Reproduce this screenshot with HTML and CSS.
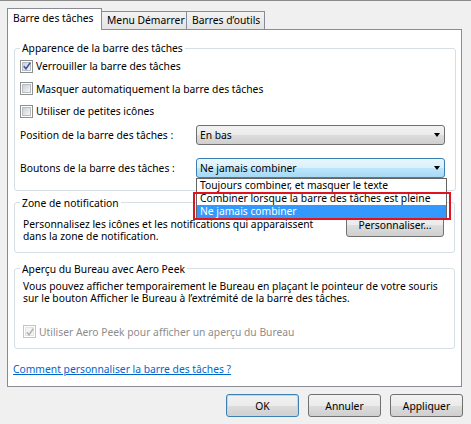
FILE: index.html
```html
<!DOCTYPE html>
<html lang="fr">
<head>
	<meta charset="UTF-8">
	<title>Propriétés de la barre des tâches</title>
	<link rel="stylesheet" href="styles.css">
</head>
<body>
	<div class="dialog">
		<div class="tabs">
			<div class="tab active">Barre des tâches</div>
			<div class="tab">Menu Démarrer</div>
			<div class="tab">Barres d’outils</div>
		</div>
		<div class="panel">
			<fieldset class="group group-look">
				<legend>Apparence de la barre des tâches</legend>
				<div class="check">
					<span class="box"><svg width="8" height="8" viewBox="0 0 8 8"><path d="M0.8 4.2 L3 6.8 L7.3 0.6" fill="none" stroke="#3e55a6" stroke-width="1.6"/></svg></span>
					<span>Verrouiller la barre des tâches</span>
				</div>
				<div class="check">
					<span class="box"></span>
					<span>Masquer automatiquement la barre des tâches</span>
				</div>
				<div class="check">
					<span class="box"></span>
					<span>Utiliser de petites icônes</span>
				</div>
				<div class="field field-first">
					<span class="field-label">Position de la barre des tâches :</span>
					<div class="combo">
						<span>En bas</span>
						<span class="arrow"></span>
					</div>
				</div>
				<div class="field">
					<span class="field-label">Boutons de la barre des tâches :</span>
					<div class="combo combo-hot">
						<span>Ne jamais combiner</span>
						<span class="arrow"></span>
						<ul class="droplist">
							<li>Toujours combiner, et masquer le texte</li>
							<li>Combiner lorsque la barre des tâches est pleine</li>
							<li class="selected">Ne jamais combiner</li>
						</ul>
						<div class="mark"></div>
					</div>
				</div>
			</fieldset>

			<fieldset class="group group-notify">
				<legend>Zone de notification</legend>
				<div class="notify-row">
					<p class="notify-text">Personnalisez les icônes et les notifications qui apparaissent<br>dans la zone de notification.</p>
					<div class="button btn-custom">Personnaliser...</div>
				</div>
			</fieldset>

			<fieldset class="group group-peek">
				<legend>Aperçu du Bureau avec Aero Peek</legend>
				<p class="peek-text">Vous pouvez afficher temporairement le Bureau en plaçant le pointeur de votre souris<br>sur le bouton Afficher le Bureau à l’extrémité de la barre des tâches.</p>
				<div class="check check-disabled">
					<span class="box"><svg width="8" height="8" viewBox="0 0 8 8"><path d="M0.8 4.2 L3 6.8 L7.3 0.6" fill="none" stroke="#b4b4b4" stroke-width="1.6"/></svg></span>
					<span>Utiliser Aero Peek pour afficher un aperçu du Bureau</span>
				</div>
			</fieldset>

			<a class="help" href="#">Comment personnaliser la barre des tâches ?</a>
		</div>
		<div class="actions">
			<div class="button btn-default">OK</div>
			<div class="button">Annuler</div>
			<div class="button">Appliquer</div>
		</div>
	</div>
</body>
</html>
```

FILE: styles.css
```css
*{
	margin:0;
	padding:0;
	box-sizing: border-box;
}
body{
	background-color: #f0f0f0;
	font-family: "Noto Sans", "Open Sans", sans-serif;
	font-size: 10.3px;
	color: #000;
}
.dialog{
	width: 471px;
	height: 424px;
	border-top: 1px solid #8a8a8a;
}

/* onglets */
.tabs{
	display: flex;
	align-items: flex-start;
	padding-left: 7px;
	margin-top: 7px;
	height: 21px;
}
.tab{
	height: 18px;
	margin-top: 3px;
	line-height: 17px;
	padding: 0 5px;
	border: 1px solid #898c95;
	border-bottom: none;
	border-left: none;
	background: linear-gradient(#f3f3f3, #e3e3e3);
	white-space: nowrap;
	overflow: hidden;
}
.tab:nth-child(2){ width: 85px; }
.tab:nth-child(3){ width: 78px; }
.tab.active{
	width: 95px;
	height: 22px;
	margin-top: 0;
	line-height: 19px;
	padding-left: 5px;
	border-left: 1px solid #898c95;
	background: #fff;
	position: relative;
	z-index: 2;
}

/* panneau */
.panel{
	width: 455px;
	height: 358px;
	margin-left: 7px;
	background-color: #fff;
	border: 1px solid #898c95;
	padding: 11px 6px 0;
}
.group{
	border: 1px solid #d5dfe5;
	border-radius: 3px;
	padding: 0 10px 0 5px;
}
.group legend{
	padding: 0 2px;
	line-height: 14px;
}
.group-look{
	padding-bottom: 12px;
}
.group-notify{
	margin-top: 5px;
	padding-bottom: 9px;
}
.group-peek{
	margin-top: 9px;
	padding-bottom: 5px;
}

/* cases a cocher */
.check{
	display: flex;
	align-items: center;
	height: 22.5px;
}
.box{
	width: 13px;
	height: 13px;
	margin-right: 3px;
	border: 1px solid #8e8f8f;
	background: #fff;
	display: flex;
	align-items: center;
	justify-content: center;
	position: relative;
}
.box::before{
	content: "";
	position: absolute;
	left: 1px;
	top: 1px;
	right: 1px;
	bottom: 1px;
	background: linear-gradient(135deg, #cbcfd5, #f6f6f6);
	border: 1px solid #b7bcc3;
}
.box svg{
	position: relative;
}
.check-disabled{
	color: #8d8d8d;
	margin-top: 16px;
	padding-left: 3px;
}
.check-disabled .box{
	border-color: #c4c4c4;
}
.check-disabled .box::before{
	background: #f4f4f4;
	border-color: #e3e3e3;
}

/* listes deroulantes */
.field{
	display: flex;
	align-items: center;
	height: 20px;
	margin-top: 13px;
}
.field-first{
	margin-top: 2px;
}
.field-label{
	width: 176px;
}
.combo{
	width: 249px;
	height: 20px;
	border: 1px solid #707070;
	border-radius: 3px;
	background: linear-gradient(#f2f2f2 0%, #ebebeb 50%, #dddddd 50%, #cfcfcf 100%);
	display: flex;
	align-items: center;
	justify-content: space-between;
	padding: 0 4px 0 3px;
	position: relative;
}
.combo-hot{
	border-color: #3c7fb1;
	background: linear-gradient(#eaf6fd 0%, #d9f0fc 50%, #bee6fd 50%, #a7d9f5 100%);
}
.arrow{
	width: 0;
	height: 0;
	border-left: 3.5px solid transparent;
	border-right: 3.5px solid transparent;
	border-top: 4px solid #000;
}
.droplist{
	list-style: none;
	position: absolute;
	left: -1px;
	top: 19px;
	width: 251px;
	border: 1px solid #646464;
	background: #fff;
	z-index: 3;
}
.droplist li{
	height: 13px;
	line-height: 13px;
	padding-left: 3px;
	white-space: nowrap;
}
.droplist li.selected{
	background-color: #3399ff;
	color: #fff;
}
.mark{
	position: absolute;
	left: -4px;
	top: 33px;
	width: 258px;
	height: 28px;
	border: 2px solid #e0141e;
	z-index: 4;
}

/* zone de notification */
.notify-row{
	display: flex;
	align-items: flex-end;
	justify-content: space-between;
	padding-top: 4px;
}
.notify-text{
	line-height: 12.5px;
	padding-left: 3px;
}
.btn-custom{
	width: 98px;
	height: 18px;
	margin-bottom: 6px;
}

.peek-text{
	line-height: 12.5px;
	padding: 4px 0 0 3px;
}

.help{
	display: block;
	margin: 13px 0 0 -1px;
	color: #0066cc;
	text-decoration: underline;
	line-height: 14px;
}

/* boutons */
.actions{
	display: flex;
	justify-content: flex-end;
	gap: 9px;
	width: 463px;
	margin-top: 7px;
}
.button{
	width: 73px;
	height: 23px;
	border: 1px solid #707070;
	border-radius: 3px;
	background: linear-gradient(#f2f2f2 0%, #ebebeb 50%, #dddddd 50%, #cfcfcf 100%);
	display: flex;
	align-items: center;
	justify-content: center;
}
.btn-default{
	border-color: #3c7fb1;
	box-shadow: inset 0 0 0 1px #a6e1fb;
}
.btn-custom{
	width: 98px;
}
```
